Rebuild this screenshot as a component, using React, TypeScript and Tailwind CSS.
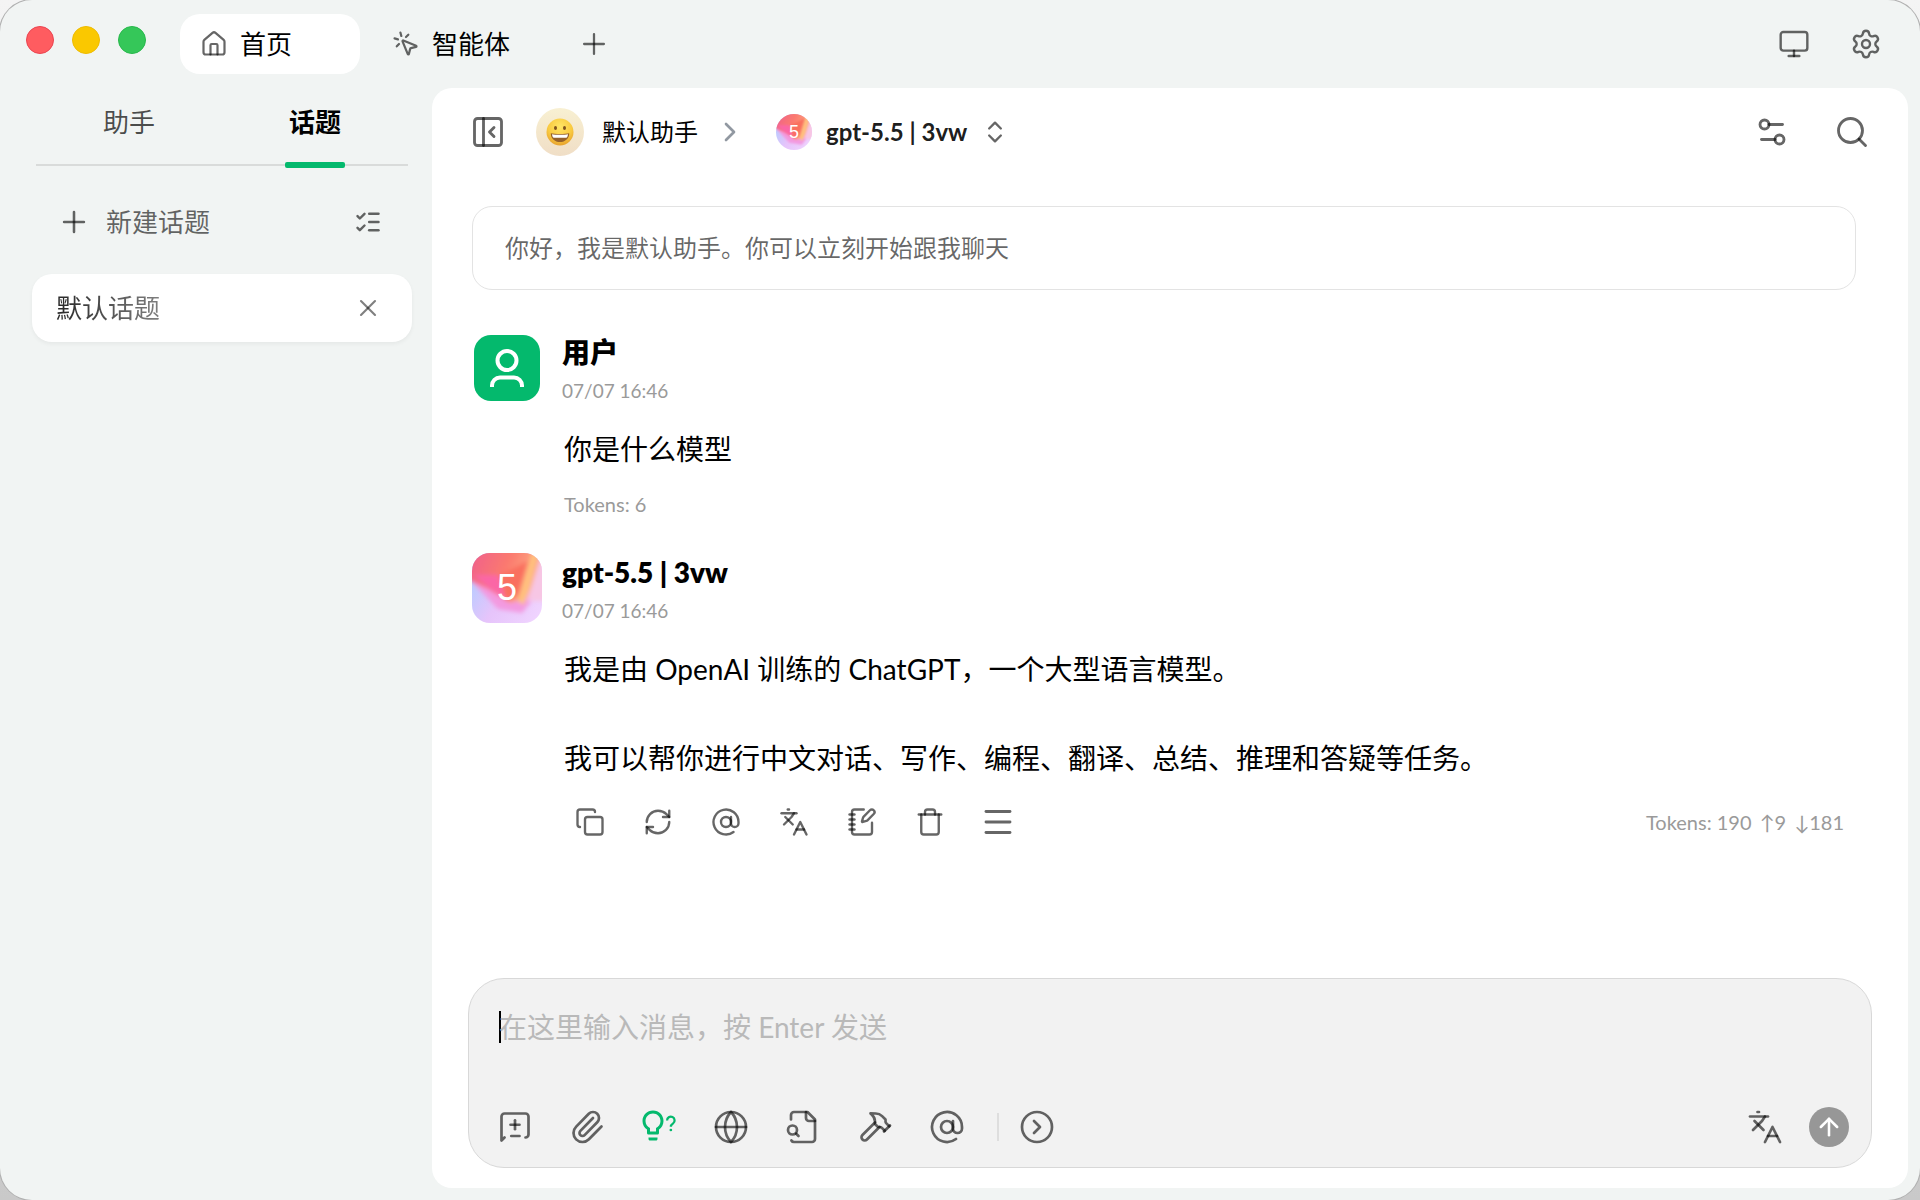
import { useState } from "react";
import {
  ArrowUp,
  AtSign,
  ChevronRight,
  ChevronsUpDown,
  CircleChevronRight,
  Copy,
  Globe,
  House,
  Languages,
  ListChecks,
  Menu,
  Monitor,
  MousePointerClick,
  NotebookPen,
  PanelLeftClose,
  Paperclip,
  Plus,
  RefreshCw,
  Search,
  Settings,
  Settings2,
  Trash,
  X,
} from "lucide-react";

function SvgIcon({ children }: { children: React.ReactNode }) {
  return (
    <svg
      width="36"
      height="36"
      viewBox="0 0 24 24"
      fill="none"
      stroke="currentColor"
      strokeWidth="1.8"
      strokeLinecap="round"
      strokeLinejoin="round"
      aria-hidden="true"
    >
      {children}
    </svg>
  );
}

function NewTopicIcon() {
  return (
    <SvgIcon>
      <path d="m5 19-2 2V5c0-1.1.9-2 2-2h14a2 2 0 0 1 2 2v12a2 2 0 0 1-2 2" />
      <path d="M9 10.5h6" />
      <path d="M12 7.500v6" />
      <path d="M9.500 18h5.500" />
    </SvgIcon>
  );
}

function FileSearchIcon() {
  return (
    <SvgIcon>
      <path d="M14 2v4a2 2 0 0 0 2 2h4" />
      <path d="M4.268 21a2 2 0 0 0 1.727 1H18a2 2 0 0 0 2-2V7l-5-5H6a2 2 0 0 0-2 2v3" />
      <path d="m9 18-1.5-1.5" />
      <circle cx="5" cy="14" r="3" />
    </SvgIcon>
  );
}

function HammerIcon() {
  return (
    <SvgIcon>
      <path d="m15 12-8.373 8.373a1 1 0 1 1-3-3L12 9" />
      <path d="m18 15 4-4" />
      <path d="m21.5 11.5-1.914-1.914A2 2 0 0 1 19 8.172V7l-2.26-2.26a6 6 0 0 0-4.202-1.756L9 2.96l.92.82A6.18 6.18 0 0 1 12 8.4V10l2 2h1.172a2 2 0 0 1 1.414.586L18.5 14.5" />
    </SvgIcon>
  );
}

function BulbQuestionIcon() {
  return (
    <svg width="36" height="36" viewBox="0 1 24 24" fill="currentColor" aria-hidden="true">
      <path
        fillRule="evenodd"
        d="M8 2c3.9 0 7 3.1 7 7 0 2.4-1.2 4.5-3 5.7V17c0 .6-.4 1-1 1H5c-.6 0-1-.4-1-1v-2.3C2.2 13.5 1 11.4 1 9c0-3.9 3.1-7 7-7m0 2C5.2 4 3 6.2 3 9c0 2.1 1.2 3.8 3 4.6V16h4v-2.4c1.8-.8 3-2.5 3-4.6 0-2.8-2.2-5-5-5M5 20h6v1c0 .6-.4 1-1 1H6c-.6 0-1-.4-1-1z"
      />
      <path
        d="M17.4 8.7a2.5 2.5 0 1 1 4 1.9c-1 .7-1.500 1.100-1.500 2.200"
        fill="none"
        stroke="currentColor"
        strokeWidth="1.5"
      />
      <circle cx="19.9" cy="15" r="0.9" />
    </svg>
  );
}

function UserIcon() {
  return (
    <svg width="48" height="48" viewBox="0 0 48 48" fill="none" stroke="currentColor" strokeWidth="4" aria-hidden="true">
      <circle cx="24" cy="16.5" r="9.5" />
      <path d="M9 43v-1.5a8 8 0 0 1 8-8h14a8 8 0 0 1 8 8V43" />
    </svg>
  );
}

function Emoji() {
  return (
    <svg width="28" height="28" viewBox="0 0 28 28" aria-label="grinning face">
      <defs>
        <radialGradient id="face" cx="0.5" cy="0.3" r="0.75">
          <stop offset="0" stopColor="#ffe566" />
          <stop offset="0.6" stopColor="#f9c93f" />
          <stop offset="1" stopColor="#e39a2a" />
        </radialGradient>
      </defs>
      <circle cx="14" cy="14" r="13.5" fill="url(#face)" />
      <ellipse cx="9.5" cy="10" rx="1.5" ry="2.1" fill="#80531c" />
      <ellipse cx="18.5" cy="10" rx="1.5" ry="2.1" fill="#80531c" />
      <path d="M4.8 15.2c3 .9 15.400.9 18.400 0 .3 5-4 8.800-9.200 8.800s-9.500-3.800-9.200-8.800Z" fill="#94602a" />
      <path d="M6 16.200c3 .7 13 .7 16 0-.1 1.300-.5 2.400-1 3.200-3 .6-11 .6-14 0-.5-.8-.9-1.900-1-3.200Z" fill="#fff" />
    </svg>
  );
}

function ModelArt({ id }: { id: string }) {
  return (
    <svg className="absolute inset-0 size-full" viewBox="0 0 70 70" aria-hidden="true">
      <defs>
        <linearGradient id={`${id}-top`} x1="0" y1="0" x2="1" y2="0.3">
          <stop offset="0" stopColor="#ee5b92" />
          <stop offset="0.55" stopColor="#fb7a6e" />
          <stop offset="1" stopColor="#ffb98a" />
        </linearGradient>
        <linearGradient id={`${id}-base`} x1="0" y1="0.4" x2="1" y2="1">
          <stop offset="0" stopColor="#b9ccff" />
          <stop offset="0.4" stopColor="#e6c4fb" />
          <stop offset="1" stopColor="#f1d6ff" />
        </linearGradient>
        <filter id={`${id}-soft`} x="-20%" y="-20%" width="140%" height="140%">
          <feGaussianBlur stdDeviation="2.2" />
        </filter>
      </defs>
      <rect width="70" height="70" fill={`url(#${id}-base)`} />
      <g filter={`url(#${id}-soft)`}>
        <path d="M-5 24 26 56 50 60 66 40 76 10 60-8H-5Z" fill="#f39ae0" />
        <path d="M-5-8H76V2L54 46 38 50 16 36-5 26Z" fill={`url(#${id}-top)`} />
        <path d="M2 22h24l8 24-16-10Z" fill="#fb66a6" />
        <path d="M28 22 56 8 46 42 34 48Z" fill="#f9705f" />
        <path d="M60 0h6L52 52l-6-4Z" fill="#ffc27e" />
        <path d="M68 6h10v42H55Z" fill="#f7c6e4" />
      </g>
    </svg>
  );
}

const iconBtn = "flex shrink-0 items-center justify-center text-black/60";

function TitleBar() {
  return (
    <header className="flex h-22 shrink-0 items-center pr-[38px] pl-[26px]">
      <div className="flex gap-[18px] pb-2">
        <button aria-label="关闭" className="size-7 rounded-full border border-[#ea4450] bg-[#ff5c60]" />
        <button aria-label="最小化" className="size-7 rounded-full border border-[#eebb00] bg-[#fac800]" />
        <button aria-label="最大化" className="size-7 rounded-full border border-[#28b84c] bg-[#35c759]" />
      </div>
      <nav className="ml-[34px] flex items-center text-[26px] text-black">
        <button className="flex h-15 w-45 items-center gap-3 rounded-[20px] bg-white pl-5">
          <House size={28} strokeWidth={1.9} className="text-black/60" />
          首页
        </button>
        <button className="flex h-15 w-45 items-center gap-3 pl-8">
          <MousePointerClick size={28} strokeWidth={1.9} className="text-black/60" />
          智能体
        </button>
        <button aria-label="新建标签" className={`${iconBtn} ml-8 size-11`}>
          <Plus size={34} strokeWidth={1.6} />
        </button>
      </nav>
      <div className="ml-auto flex items-center gap-10">
        <button aria-label="显示" className={iconBtn}>
          <Monitor size={32} strokeWidth={1.8} />
        </button>
        <button aria-label="设置" className={iconBtn}>
          <Settings size={32} strokeWidth={1.8} />
        </button>
      </div>
    </header>
  );
}

function Sidebar() {
  const [tab, setTab] = useState("话题");

  return (
    <aside className="w-108 shrink-0 text-[26px]">
      <div className="mr-6 ml-9 grid h-[78px] grid-cols-2 border-b-2 border-[#d9dbda]">
        {["助手", "话题"].map((name) => (
          <button
            key={name}
            onClick={() => setTab(name)}
            className={`relative pb-2 ${tab === name ? "font-bold text-black" : "text-black/70"}`}
          >
            {name}
            {tab === name && (
              <span className="absolute -bottom-1 left-1/2 h-1.5 w-15 -translate-x-1/2 rounded-xs bg-[#04b96d]" />
            )}
          </button>
        ))}
      </div>
      <div className="mt-7 mr-[50px] ml-[57px] flex h-14 items-center justify-between text-black/60">
        <button className="flex items-center gap-[15px]">
          <Plus size={34} strokeWidth={1.8} />
          新建话题
        </button>
        <button aria-label="批量管理">
          <ListChecks size={28} strokeWidth={2.1} />
        </button>
      </div>
      <div className="mt-6 mr-5 ml-8 flex h-17 items-center justify-between rounded-[20px] bg-white pr-[30px] pl-6 shadow-[0_2px_4px_rgba(0,0,0,0.05)]">
        <span className="bg-linear-to-r from-black/85 to-black/50 bg-clip-text text-transparent">默认话题</span>
        <button aria-label="删除话题" className="text-black/50">
          <X size={28} strokeWidth={1.8} />
        </button>
      </div>
    </aside>
  );
}

function ChatHeader() {
  return (
    <div className="flex h-22 shrink-0 items-center px-[38px]">
      <button aria-label="收起侧栏" className={iconBtn}>
        <PanelLeftClose size={36} strokeWidth={1.9} />
      </button>
      <button className="ml-[30px] flex items-center gap-[18px] text-2xl text-black">
        <span className="flex size-12 items-center justify-center rounded-full bg-linear-to-b from-[#f8f0d2] to-[#f0dec6]">
          <Emoji />
        </span>
        默认助手
      </button>
      <ChevronRight size={32} strokeWidth={2} className="ml-4 text-[#9198a1]" />
      <button className="ml-[30px] flex items-center gap-[14px] text-2xl font-bold text-black/90">
        <span className="relative flex size-9 items-center justify-center overflow-hidden rounded-full">
          <ModelArt id="model-sm" />
          <span className="relative font-['Liberation_Sans',sans-serif] text-lg font-normal text-white">5</span>
        </span>
        gpt-5.5 | 3vw
        <ChevronsUpDown size={28} strokeWidth={2} className="text-black/60" />
      </button>
      <div className="ml-auto flex gap-11">
        <button aria-label="对话设置" className={iconBtn}>
          <Settings2 size={36} strokeWidth={1.9} />
        </button>
        <button aria-label="搜索" className={iconBtn}>
          <Search size={36} strokeWidth={1.9} />
        </button>
      </div>
    </div>
  );
}

function Message({ avatar, name, children }: { avatar: React.ReactNode; name: string; children: React.ReactNode }) {
  return (
    <article className="flex gap-5">
      <div className="flex size-[70px] shrink-0 items-center justify-center">{avatar}</div>
      <div className="min-w-0 flex-1">
        <h2 className="text-[28px] leading-[38px] font-extrabold text-black">{name}</h2>
        <time className="block text-[19px] leading-10 text-[#9a9a9a]">07/07 16:46</time>
        <div className="pl-0.5">{children}</div>
      </div>
    </article>
  );
}

const messageActions = [
  { label: "复制", icon: <Copy size={30} strokeWidth={1.9} /> },
  { label: "重新生成", icon: <RefreshCw size={30} strokeWidth={1.9} /> },
  { label: "提及模型", icon: <AtSign size={30} strokeWidth={1.9} /> },
  { label: "翻译", icon: <Languages size={30} strokeWidth={1.9} /> },
  { label: "保存到笔记", icon: <NotebookPen size={30} strokeWidth={1.9} /> },
  { label: "删除", icon: <Trash size={30} strokeWidth={1.9} /> },
  { label: "更多", icon: <Menu size={36} strokeWidth={1.9} /> },
];

function ChatMessages() {
  return (
    <div className="min-h-0 flex-1 overflow-y-auto pt-[30px] pr-13 pl-10">
      <div className="flex h-[84px] items-center rounded-[20px] border border-[#e3e3e3] px-8 text-2xl text-black/60">
        你好，我是默认助手。你可以立刻开始跟我聊天
      </div>
      <div className="mt-[43px] flex flex-col gap-[34px]">
        <Message
          name="用户"
          avatar={
            <span className="flex size-[66px] items-center justify-center rounded-[17px] bg-[#04b96d] text-white">
              <UserIcon />
            </span>
          }
        >
          <p className="mt-[14px] text-[28px] leading-12 text-black">你是什么模型</p>
          <p className="mt-4 text-[20px] leading-[30px] text-[#9a9a9a]">Tokens: 6</p>
        </Message>
        <Message
          name="gpt-5.5 | 3vw"
          avatar={
            <span className="relative flex size-[70px] items-center justify-center overflow-hidden rounded-[18px]">
              <ModelArt id="model-lg" />
              <span className="relative font-['Liberation_Sans',sans-serif] text-4xl text-white">5</span>
            </span>
          }
        >
          <div className="mt-[14px] flex flex-col gap-[41px] text-[28px] leading-12 text-black">
            <p>我是由 OpenAI 训练的 ChatGPT，一个大型语言模型。</p>
            <p>我可以帮你进行中文对话、写作、编程、翻译、总结、推理和答疑等任务。</p>
          </div>
          <div className="mt-5 flex h-10 items-center justify-between pr-3">
            <div className="-ml-2 flex">
              {messageActions.map((action) => (
                <button key={action.label} aria-label={action.label} className={`${iconBtn} w-17`}>
                  {action.icon}
                </button>
              ))}
            </div>
            <div className="flex gap-2 text-[20px] text-[#9a9a9a]">
              <span>Tokens: 190</span>
              <span>↑9</span>
              <span>↓181</span>
            </div>
          </div>
        </Message>
      </div>
    </div>
  );
}

const tools = [
  { label: "新建话题", icon: <NewTopicIcon /> },
  { label: "上传附件", icon: <Paperclip size={36} strokeWidth={1.8} /> },
  { label: "思考", icon: <BulbQuestionIcon />, active: true },
  { label: "网络搜索", icon: <Globe size={36} strokeWidth={1.8} /> },
  { label: "知识库", icon: <FileSearchIcon /> },
  { label: "工具", icon: <HammerIcon /> },
  { label: "提及", icon: <AtSign size={36} strokeWidth={1.8} /> },
];

function Composer() {
  return (
    <form className="mx-9 mb-5 flex h-[190px] shrink-0 flex-col rounded-[36px] border border-[#d8d8d8] bg-[#f2f2f2] pt-6 pb-5">
      <div className="flex flex-1 pr-6 pl-[30px]">
        <span className="mt-2 h-8 w-0.5 bg-black" />
        <textarea
          aria-label="消息"
          placeholder="在这里输入消息，按 Enter 发送"
          className="-ml-0.5 flex-1 resize-none bg-transparent text-[28px] leading-12 text-black caret-transparent outline-none placeholder:text-[#b9b9b9]"
        />
      </div>
      <div className="flex h-10 items-center pr-[22px] pl-[10px]">
        {tools.map((tool) => (
          <button
            key={tool.label}
            type="button"
            aria-label={tool.label}
            className={`flex w-18 justify-center ${tool.active ? "text-[#04b96d]" : "text-black/60"}`}
          >
            {tool.icon}
          </button>
        ))}
        <span className="mx-[14px] h-7 w-0.5 bg-[#dedede]" />
        <button type="button" aria-label="展开" className={`${iconBtn} w-12`}>
          <CircleChevronRight size={36} strokeWidth={1.8} />
        </button>
        <div className="ml-auto flex items-center gap-6">
          <button type="button" aria-label="翻译" className={`${iconBtn} size-10`}>
            <Languages size={36} strokeWidth={1.8} />
          </button>
          <button aria-label="发送" className="flex size-10 items-center justify-center rounded-full bg-[#979797] text-white">
            <ArrowUp size={28} strokeWidth={2.2} />
          </button>
        </div>
      </div>
    </form>
  );
}

export default function App() {
  return (
    <div className="h-screen bg-linear-to-b from-[#f4f4f4] to-[#c9c9c9] font-['Lato','Noto_Sans_CJK_SC',sans-serif]">
      <div className="flex h-full flex-col overflow-hidden rounded-[32px] bg-[#f1f4f3] shadow-[0_0_0_1px_#b0b0b0]">
        <TitleBar />
        <div className="flex min-h-0 flex-1 pr-3 pb-3">
          <Sidebar />
          <main className="flex min-w-0 flex-1 flex-col rounded-[20px] bg-white">
            <ChatHeader />
            <ChatMessages />
            <Composer />
          </main>
        </div>
      </div>
    </div>
  );
}
